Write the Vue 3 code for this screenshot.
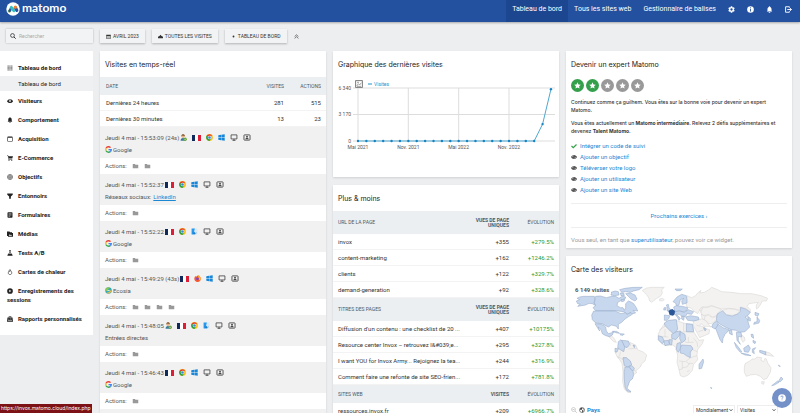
<script setup>
import { ref } from 'vue'

const menu = [
  { label: 'Visiteurs', icon: 'eye' },
  { label: 'Comportement', icon: 'bell' },
  { label: 'Acquisition', icon: 'window' },
  { label: 'E-Commerce', icon: 'cart' },
  { label: 'Objectifs', icon: 'target' },
  { label: 'Entonnoirs', icon: 'funnel' },
  { label: 'Formulaires', icon: 'form' },
  { label: 'Médias', icon: 'media' },
  { label: 'Tests A/B', icon: 'flask' },
  { label: 'Cartes de chaleur', icon: 'drop' },
  { label: 'Enregistrements des sessions', icon: 'record' },
  { label: 'Rapports personnalisés', icon: 'report' }
]

const visits = [
  { time: 'Jeudi 4 mai - 15:53:09 (24s)', icons: ['avatar', 'flag', 'chrome', 'windows', 'monitor', 'card'], source: 'Google', logo: 'google', actions: 2 },
  { time: 'Jeudi 4 mai - 15:52:37', icons: ['flag', 'chrome', 'windows', 'monitor', 'card'], source: 'Réseaux sociaux:', link: 'LinkedIn', actions: 1 },
  { time: 'Jeudi 4 mai - 15:52:22', icons: ['flag', 'chrome', 'finder', 'monitor', 'card'], source: 'Google', logo: 'google', actions: 1 },
  { time: 'Jeudi 4 mai - 15:49:29 (43s)', icons: ['flag', 'firefox', 'windows', 'monitor', 'card'], source: 'Ecosia', logo: 'ecosia', actions: 4 },
  { time: 'Jeudi 4 mai - 15:48:05', icons: ['avatar', 'flag', 'chrome', 'finder', 'monitor', 'card'], source: 'Entrées directes', actions: 1 },
  { time: 'Jeudi 4 mai - 15:46:43', icons: ['flag', 'chrome', 'windows', 'monitor', 'card'], source: 'Google', logo: 'google', actions: 1 }
]

const groups = [
  {
    title: 'URL de la page', metric: 'Vues de page uniques',
    rows: [['invox', '+355', '+279.5%'], ['content-marketing', '+162', '+1246.2%'], ['clients', '+122', '+329.7%'], ['demand-generation', '+92', '+328.6%']]
  },
  {
    title: 'Titres des pages', metric: 'Vues de page uniques',
    rows: [
      ["Diffusion d'un contenu : une checklist de 20 ...", '+407', '+10175%'],
      ['Resource center Invox – retrouvez l&#039;e...', '+295', '+327.8%'],
      ['I want YOU for Invox Army... Rejoignez la tea...', '+244', '+316.9%'],
      ['Comment faire une refonte de site SEO-frien...', '+172', '+781.8%']
    ]
  },
  { title: 'Sites web', metric: 'Visites', rows: [['ressources.invox.fr', '+209', '+6966.7%']] }
]

const challenges = [
  { label: 'Intégrer un code de suivi', done: true },
  { label: 'Ajouter un objectif' },
  { label: 'Téléverser votre logo' },
  { label: 'Ajouter un utilisateur' },
  { label: 'Ajouter un site Web' }
]

const values = [...Array(22).fill(0), 2020, 6200]
const points = values.map((v, i) => ({ x: 25 + i * 8.39, y: 64 - (v / 6340) * 53 }))
const line = points.map(p => `${p.x},${p.y}`).join(' ')
const months = ['Mai 2021', 'Nov. 2021', 'Mai 2022', 'Nov. 2022']

const search = ref('')

const quietLands = [
  '232,106 245,99 262,97 298,97 290,104 292,114 286,124 275,130 266,137 260,142 254,138 251,128 244,118 236,111',
  '284,132 292,130 298,134 292,138 284,137',
  '130,244 138,246 142,244 148,252 154,262 146,260 138,252',
  '194,262 212,270 218,284 236,292 245,300 240,318 230,326 226,336 212,348 206,344 208,338 200,330 196,318 184,308 174,308 172,316 158,308 150,292 156,290 160,280 176,290 178,276 186,276 196,272',
  '158,304 174,314 178,334 176,350 178,380 182,404 190,411 198,412 188,412 178,402 173,380 174,350 171,326',
  '207,346 216,352 208,358 204,353',
  '366,122 380,128 392,122 398,114 408,106 404,114 418,112 432,104 440,97 458,104 470,110 500,112 528,116 560,116 588,122 608,130 604,138 592,138 588,146 580,158 574,162 574,150 580,142 566,144 552,146 546,154 556,164 556,172 546,162 530,156 526,166 510,162 490,160 470,162 456,158 440,152 424,156 410,156 404,166 398,176 386,168 380,160 366,156 362,146 368,140',
  '404,164 412,157 426,158 440,153 456,158 470,164 460,172 456,182 442,186 430,178 418,182 410,178 408,170',
  '408,178 420,183 430,180 442,188 456,184 458,192 450,198 440,206 430,206 424,198 412,192',
  '472,166 490,161 510,163 524,168 514,178 500,181 484,178',
  '386,198 400,192 412,192 424,198 430,208 438,216 430,214 418,214 408,206 404,212 416,216 426,222 434,224 432,236 418,242 404,248 398,236 390,222 384,210',
  '338,198 356,204 364,206 384,208 386,230 396,246 402,256 416,254 412,266 398,284 396,300 398,314 386,328 382,346 370,360 356,366 346,362 342,344 336,322 338,302 334,286 332,276 322,270 306,272 292,268 280,256 280,236 290,218 300,204 310,198 330,194',
  '538,338 540,326 554,318 562,312 570,312 576,306 590,308 588,316 596,320 600,310 604,312 608,324 618,338 616,352 606,370 596,374 586,364 572,358 556,360 544,364 538,352',
  '590,380 598,380 596,388 590,386',
  '602,290 614,294 626,304 614,302 602,300',
  '528,238 538,246 540,256 534,262 528,252'
]

const quietBorders = [
  '310,198 300,214 282,226', '356,204 356,230 386,232', '336,230 356,232', '300,222 300,246', '282,244 310,246',
  '346,238 362,262 386,262', '386,250 396,262 398,276', '370,246 370,262', '342,318 362,320 376,308 396,302',
  '352,320 352,342 342,344', '352,338 366,336 374,324 384,326', '364,320 374,328', '366,350 374,346', '380,282 396,290',
  '382,276 378,292', '414,158 404,176', '420,184 418,194', '404,214 394,210', '418,214 414,226 400,230', '190,282 206,280 216,280', '166,290 164,304'
]

const activeLands = [
  '34,138 44,134 36,130 44,126 56,124 88,124 90,138 86,144 98,152 92,152 82,146 72,145 62,150 50,152 38,154 46,148 38,146',
  '92,124 106,123 124,128 140,124 152,124 162,130 172,124 182,126 180,132 170,136 158,142 156,152 166,158 174,158 178,166 182,158 182,146 190,138 200,142 206,146 214,158 218,168 204,166 212,174 202,176 198,172 188,178 176,170 150,167 92,167 84,158 92,152 88,144',
  '138,112 150,108 160,110 162,120 148,122 138,120', '164,104 180,100 206,97 232,97 222,104 206,108 196,112 182,110 170,112',
  '182,116 196,114 210,120 216,132 210,138 198,132 190,124', '166,114 176,114 178,122 168,122', '168,134 178,132 178,138 170,140',
  '86,168 150,168 168,176 180,173 186,178 198,173 202,178 192,184 180,192 170,202 160,208 160,222 154,214 140,210 130,216 122,212 112,206 92,204 82,194 80,180',
  '90,206 104,207 114,210 122,216 124,228 130,236 138,234 146,230 142,240 134,245 122,242 112,236 108,224 100,216 104,228 96,216',
  '142,229 154,229 164,235 152,233', '166,236 178,237 174,241 166,240',
  '160,260 168,254 174,262 180,274 176,290 166,284 158,278', '170,256 190,258 194,268 186,278 178,274 174,264', '150,280 160,281 156,291 150,291', '204,270 210,272 208,278',
  '174,308 184,308 196,318 200,330 188,336 178,332', '192,334 200,332 208,340 204,348 196,342',
  '180,336 192,336 204,350 206,360 202,372 194,378 190,390 186,400 198,410 186,408 180,396 178,370 178,350',
  '304,150 310,148 312,158 318,166 306,168 308,160', '297,158 304,158 302,165 296,165',
  '324,140 336,126 350,118 364,122 366,144 352,148 350,138 356,130 346,134 342,150 334,152 332,144',
  '330,102 352,102 346,107 334,107', '326,156 334,152 352,154 368,158 366,166 356,170 342,168 330,170',
  '330,170 344,168 358,172 370,164 386,170 380,178 366,176 362,184 350,184 344,178 334,178',
  '330,178 336,180 346,190 342,196 338,188', '350,184 358,184 356,196 350,192', '298,180 314,182 312,190 306,196 298,196',
  '362,186 376,182 400,186 402,194 386,198 368,196', '298,204 310,196 334,194 338,222 328,238 316,228 300,212',
  '364,206 382,208 386,230 364,230', '280,242 292,246 298,258 292,266 280,254', '296,258 310,256 314,268 300,272',
  '320,238 334,230 346,228 344,240 332,254 320,250', '346,230 360,238 362,254 350,264 344,250', '312,254 322,254 320,270 314,268',
  '336,266 346,262 348,278 340,292 334,284', '350,270 378,272 384,282 376,290 376,308 364,302 356,296 346,294 346,280',
  '414,312 416,320 410,340 402,342 402,328',
  '440,216 444,206 454,198 460,206 458,216 450,222', '452,220 460,208 466,212 474,218 492,224 488,230 480,238 474,250 472,264 464,252 458,236',
  '456,178 472,167 484,180 502,183 516,178 526,170 526,157 542,162 556,172 548,182 540,186 548,192 550,204 554,216 540,230 524,232 512,226 498,224 480,216 466,208 454,196',
  '514,232 528,232 530,246 520,244 520,256 526,268 516,256', '492,226 500,226 502,240 494,236',
  '508,262 520,276 530,290 526,292 514,278', '528,294 548,298 558,302 540,300', '536,280 550,270 556,280 550,292 538,290',
  '562,282 572,278 566,286 568,296 562,292', '558,238 564,238 566,250 560,246', '564,256 572,260 570,266 564,262', '584,286 602,290 602,300 594,296 584,292',
  '570,172 582,176 578,184 570,180', '576,186 584,196 582,204 566,208 568,202 576,200', '548,184 556,190 556,198 550,196',
  '648,366 654,372 646,380 640,380', '638,378 642,382 628,390 620,392', '640,330 646,334 642,334', '416,218 424,222 420,228', '436,398 440,398 440,401'
]
</script>

<template>
  <svg class="sprite" aria-hidden="true">
    <symbol id="eye" viewBox="0 0 12 12"><path d="M6 2.500C3 2.500 1 4.500 0 6.300 1 8 3 10 6 10s5-2 6-3.700C11 4.500 9 2.500 6 2.500z" /><circle cx="6" cy="6" r="2.300" fill="#fff" /><circle cx="6" cy="6" r="1.300" /></symbol>
    <symbol id="hidden" viewBox="0 0 12 12"><path d="M6 2C3 2 1 4 0 6c1 2 3 4 6 4s5-2 6-4c-1-2-3-4-6-4z" /><path d="M2.500 6c.5-1.200 1.500-2 2.500-2.300M9.500 6C9 7.200 8 8 7 8.300" fill="none" stroke="#fff" stroke-width=".9" /></symbol>
    <symbol id="bell" viewBox="0 0 12 12"><path d="M6 .5c.8 0 1.200.5 1.200 1.200C9 2.300 9.500 4 9.500 6v2l1.300 1.500H1.200L2.500 8V6c0-2 .5-3.700 2.300-4.300C4.800 1 5.200.5 6 .5zM4.500 10.200h3c0 1-.7 1.500-1.500 1.500s-1.500-.5-1.500-1.500z" /></symbol>
    <symbol id="window" viewBox="0 0 12 12"><path d="M2 .8h8c.7 0 1.200.5 1.200 1.200v8c0 .7-.5 1.200-1.200 1.200H2C1.300 11.200.8 10.700.8 10V2C.8 1.300 1.300.8 2 .8zM2 3.500V10h8V3.500z" fill-rule="evenodd" /></symbol>
    <symbol id="cart" viewBox="0 0 12 12"><path d="M0 1h2.200l.7 1.500H12L10.500 7H4.300l-.5 1.200h6.700v1H2.200L3.200 7 1.500 2.200H0z" /><circle cx="4" cy="10.500" r="1.100" /><circle cx="9.500" cy="10.500" r="1.100" /></symbol>
    <symbol id="target" viewBox="0 0 12 12"><g fill="none" stroke="currentColor" stroke-width="1.200"><circle cx="6" cy="6" r="5" /><circle cx="6" cy="6" r="2.700" /></g><circle cx="6" cy="6" r="1" /></symbol>
    <symbol id="funnel" viewBox="0 0 12 12"><path d="M.5 1h11v2.500L7.700 7v4.500H4.300V7L.5 3.500z" /></symbol>
    <symbol id="form" viewBox="0 0 12 12"><rect x="1" y=".5" width="10" height="11" rx="1.500" /><path d="M3 3.500h6M3 6h6M3 8.500h3.500" stroke="#fff" /></symbol>
    <symbol id="media" viewBox="0 0 12 12"><path d="M0 1h5l1 1.500h4V4h2v7.500H2V10H0z" /><path d="M3.500 9.500l2-3 1.500 1.800L8 7l2 2.500z" fill="#fff" /></symbol>
    <symbol id="flask" viewBox="0 0 12 12"><path d="M4 .5h4v1.200h-.8V5l4 5c.4.700 0 1.500-.8 1.500H1.600c-.8 0-1.200-.8-.8-1.500l4-5V1.700H4z" /><path d="M5.600 2v3.500L4 7.500h4L6.400 5.500V2z" fill="#fff" /></symbol>
    <symbol id="drop" viewBox="0 0 12 12"><path d="M6 1C7 3.500 9.500 5 9.500 7.700 9.500 9.800 8 11.200 6 11.200S2.500 9.800 2.500 7.700C2.500 6 4 5.200 3.800 3.200 5 3.700 5.500 4.300 5.500 5 6 4 6.200 2.500 6 1z" fill="none" stroke="currentColor" stroke-width="1.200" /></symbol>
    <symbol id="record" viewBox="0 0 12 12"><circle cx="6" cy="6" r="5.700" /><path d="M4.600 3.600v4.800L8.500 6z" fill="#fff" /></symbol>
    <symbol id="report" viewBox="0 0 12 12"><path d="M3.500.5h5V3H11l1 8.500H0L1 3h2.500z" /><path d="M4.500 1.500h3V3h-3zM2 8h8v1H2zM3 5.500h1.500V7H3zM7 5h1.500v2H7z" fill="#fff" /></symbol>
    <symbol id="grid" viewBox="0 0 12 12"><path d="M1 2h10M1 4.700h10M1 7.400h10M1 10h10" stroke="currentColor" stroke-width="1.300" stroke-dasharray="2.700 .9" /></symbol>
    <symbol id="search" viewBox="0 0 12 12"><circle cx="5" cy="5" r="3.800" fill="none" stroke="currentColor" stroke-width="1.600" /><path d="M8 8l3.300 3.300" stroke="currentColor" stroke-width="2" /></symbol>
    <symbol id="calendar" viewBox="0 0 12 12"><path d="M.5 1.500h11v10H.5zM1.800 4.500v5.700h8.400V4.500z" fill-rule="evenodd" /><path d="M3 6h6M3 8.500h6" stroke="currentColor" stroke-width="1.200" stroke-dasharray="1.500 .7" /></symbol>
    <symbol id="segment" viewBox="0 0 12 12"><path d="M6 1.500l2.500 3.500c2 .5 3.500 1.500 3.500 3v2H0V8c0-1.500 1.500-2.500 3.500-3z" /></symbol>
    <symbol id="dot" viewBox="0 0 12 12"><circle cx="6" cy="6" r="2.200" /></symbol>
    <symbol id="chevrons" viewBox="0 0 12 12"><path d="M1.500 6L6 2l4.500 4M1.500 10.500L6 6.500l4.500 4" fill="none" stroke="currentColor" stroke-width="1.500" /></symbol>
    <symbol id="down" viewBox="0 0 12 12"><path d="M1.500 3.500L6 8.500l4.500-5" fill="none" stroke="currentColor" stroke-width="2.200" /></symbol>
    <symbol id="gear" viewBox="0 0 12 12"><path d="M4.800.5h2.400l.4 1.600 1 .6 1.600-.5 1.200 2.100-1.200 1.100v1.200l1.200 1.100-1.200 2.100-1.600-.5-1 .6-.4 1.600H4.800l-.4-1.600-1-.6-1.600.5L.6 7.700l1.200-1.100V5.400L.6 4.300l1.200-2.100 1.600.5 1-.6zM6 4a2 2 0 100 4 2 2 0 000-4z" fill-rule="evenodd" /></symbol>
    <symbol id="info" viewBox="0 0 12 12"><circle cx="6" cy="6" r="5.700" /><path d="M6 2.300v1.700M6 5v4.500" stroke="#2450a0" stroke-width="1.500" /></symbol>
    <symbol id="logout" viewBox="0 0 12 12"><path d="M7.500 3V1.300H1v9.400h6.500V9M4 6h7M8.500 3.500L11 6 8.500 8.500" fill="none" stroke="currentColor" stroke-width="1.600" /></symbol>
    <symbol id="folder" viewBox="0 0 12 12"><path d="M.5 2h4.200l1.300 1.300h5.500v7H.5z" /></symbol>
    <symbol id="avatar" viewBox="0 0 12 12"><path d="M1 11.500c0-3 1.500-4.500 4-4.500s4 1.500 4 4.500z" fill="#39799f" /><circle cx="5.300" cy="4" r="2.700" fill="#e8b182" /><path d="M2.400 4C2.200 1.500 3.500.5 5.300.5s3.200 1 2.900 3.300C7 3 5 3.200 4 2.500 3.500 3.500 3 4 2.400 4z" fill="#80552c" /><circle cx="9" cy="9" r="2.800" fill="#6ca53b" /><path d="M7.700 9l1 1 1.700-2" fill="none" stroke="#fff" stroke-width=".8" /></symbol>
    <symbol id="flag" viewBox="0 0 9 6"><path fill="#fff" d="M0 0h9v6H0z" /><path fill="#102a5c" d="M0 0h3v6H0z" /><path fill="#dc1f36" d="M6 0h3v6H6z" /></symbol>
    <symbol id="chrome" viewBox="0 0 12 12"><circle cx="6" cy="6" r="5.800" fill="#f8c21c" /><path d="M6 6L1 3.100A5.800 5.800 0 0111 3.100H6z" fill="#e33b2e" /><path d="M6 6L1 3.100A5.800 5.800 0 006 11.800L8.600 7.500z" fill="#2da14b" /><circle cx="6" cy="6" r="2.800" fill="#fff" /><circle cx="6" cy="6" r="2.200" fill="#3f7fe8" /></symbol>
    <symbol id="firefox" viewBox="0 0 12 12"><path d="M7 .3c3.500 1.500 5 4.200 4.500 7A5.500 5.500 0 01.6 7C.3 4.800 1.200 3 2.300 1.700L3.500 3.200z" fill="#f7582f" /><path d="M7 .3c3.800 1.700 5 4.500 4.400 7.200C10.500 10 8 9.500 8.200 6.800 8.300 4.500 6.500 3 7 .3z" fill="#fdb72b" /><circle cx="5.900" cy="6.500" r="2.400" fill="#7c43cc" /></symbol>
    <symbol id="windows" viewBox="0 0 12 12"><path fill="#1785d8" d="M.5 2.100L5.300 1.400v4.300H.5zM5.900 1.300L11.500.5v5.200H5.900zM.5 6.300h4.800v4.300L.5 9.900zM5.900 6.300h5.600v5.200l-5.600-.8z" /></symbol>
    <symbol id="finder" viewBox="0 0 12 12"><path fill="#d9e9f5" d="M5 1h6v10H5z" /><path fill="#2698ee" d="M1 1h5.700C5.800 3 5.500 5 5.400 6.800h1.500c0 1.500.1 3 .6 4.200H1z" /><path d="M3 8.300c2 1.500 4.500 1.500 6.500 0" fill="none" stroke="#1c5283" stroke-width=".8" /></symbol>
    <symbol id="monitor" viewBox="0 0 12 12"><path d="M1 1.500h10v7H1zM6 8.500v2M3.500 11h5" fill="none" stroke="#444" stroke-width="1.400" /></symbol>
    <symbol id="card" viewBox="0 0 12 12"><rect x=".8" y="1.500" width="10.400" height="9" rx="1" fill="none" stroke="#444" stroke-width="1.500" /><circle cx="6" cy="4.700" r="1.600" fill="#444" /><path d="M3 9c.2-1.700 1.300-2.300 3-2.300S8.800 7.300 9 9z" fill="#444" /></symbol>
    <symbol id="google" viewBox="0 0 12 12"><g fill="none" stroke-width="2.400"><path d="M9.500 2.800A4.700 4.700 0 002 3.700" stroke="#e94335" /><path d="M2 3.700a4.700 4.700 0 000 4.600" stroke="#f9bb05" /><path d="M2 8.300a4.700 4.700 0 007 1.300" stroke="#34a853" /><path d="M9 9.600A4.700 4.700 0 0010.700 6.200H6" stroke="#4285f4" /></g></symbol>
    <symbol id="ecosia" viewBox="0 0 12 12"><circle cx="6" cy="6" r="5.600" fill="#36acb8" /><path d="M1 3.500C2.500 1 5 .3 7 .7 6 2 7.500 3 5 4.500 3 5.500 4 7 1 7z" fill="#8bc94b" /><path d="M3 9c2 1 5-.5 6-3.500L11 7c-1 3.500-4.500 5.500-8 3.500z" fill="#f4b63f" /><path d="M4 6h4" stroke="#fff" stroke-width="1.300" /></symbol>
    <symbol id="star" viewBox="0 0 12 12"><path d="M6 .5l1.700 3.600 3.900.5-2.900 2.700.8 3.900L6 9.300l-3.500 1.900.8-3.900L.4 4.600l3.900-.5z" /></symbol>
    <symbol id="check" viewBox="0 0 12 12"><path d="M1 6l3.500 3.500L11 3" fill="none" stroke="#34a048" stroke-width="2.400" /></symbol>
    <symbol id="zoomout" viewBox="0 0 12 12"><path d="M8 8l3.500 3.500M3 5h4" stroke="currentColor" stroke-width="1.200" /><circle cx="5" cy="5" r="4" fill="none" stroke="currentColor" /></symbol>
    <symbol id="globe" viewBox="0 0 12 12"><circle cx="6" cy="6" r="5" fill="#fff" stroke="#444" stroke-width="1.200" /><path d="M2 3l3-1.500 2 1-1 2.500-2 1-2-1zM6 6l3 1-1 3.500-1.500.5zM8.500 2L11 5 9 5z" fill="#444" /></symbol>
    <symbol id="help" viewBox="0 0 12 12"><circle cx="6" cy="6" r="5.800" fill="#fff" /><path d="M4.300 4.700C4.300 3.500 5 2.900 6 2.900s1.700.6 1.700 1.600C7.700 5.700 6 5.800 6 7.200M6 8.200v1.200" fill="none" stroke="#7390c8" stroke-width="1.200" /></symbol>
    <symbol id="picture" viewBox="0 0 12 12"><rect x="1" y="1" width="10" height="10" fill="#fff" stroke="#666" stroke-width="1.300" /><path d="M2.500 9L5 5.500l2 2L9.500 4M3 3.500h3M3 9.500h6" fill="none" stroke="#777" /></symbol>
  </svg>

  <div class="page">
    <header class="topbar">
      <a class="brand" href="#">
        <svg viewBox="0 0 14 14"><circle cx="7" cy="7" r="6.700" fill="#fff" /><circle cx="3.300" cy="9" r="1.600" fill="#95c748" /><path d="M3.600 8.800L5.300 6" stroke="#3152a0" stroke-width="2.600" stroke-linecap="round" /><path d="M5.300 5.400l2.500 3.300" stroke="#35bfc0" stroke-width="3" stroke-linecap="round" /><path d="M9.400 5.500l1.500 3" stroke="#3152a0" stroke-width="3" stroke-linecap="round" /><circle cx="9.300" cy="5.200" r="1.600" fill="#f38334" /></svg>
        <span>matomo</span>
      </a>
      <nav class="topnav">
        <a class="active" href="#">Tableau de bord</a>
        <a href="#">Tous les sites web</a>
        <a href="#">Gestionnaire de balises</a>
        <a v-for="i in ['gear', 'info', 'bell', 'logout']" :key="i" class="tool" href="#" :aria-label="i"><svg><use :href="'#' + i" /></svg></a>
      </nav>
    </header>

    <div class="controls">
      <label class="search">
        <svg><use href="#search" /></svg>
        <input v-model="search" type="text" placeholder="Rechercher" aria-label="Rechercher">
      </label>
      <div class="selectors">
        <button type="button"><svg><use href="#calendar" /></svg>Avril 2023</button>
        <button type="button"><svg><use href="#segment" /></svg>Toutes les visites</button>
        <button type="button"><svg><use href="#dot" /></svg>Tableau de bord</button>
        <button type="button" class="collapse" aria-label="Replier"><svg><use href="#chevrons" /></svg></button>
      </div>
    </div>

    <div class="body">
      <nav class="sidebar">
        <a class="item first" href="#"><svg><use href="#grid" /></svg>Tableau de bord</a>
        <a class="sub" href="#">Tableau de bord</a>
        <a v-for="m in menu" :key="m.label" class="item" href="#"><svg><use :href="'#' + m.icon" /></svg>{{ m.label }}</a>
      </nav>

      <main class="columns">
        <section class="column">
          <article class="card grow">
            <h2>Visites en temps-réel</h2>
            <table class="totals">
              <thead><tr><th>Date</th><th>Visites</th><th>Actions</th></tr></thead>
              <tbody>
                <tr><td>Dernières 24 heures</td><td>281</td><td>515</td></tr>
                <tr><td>Dernières 30 minutes</td><td>13</td><td>23</td></tr>
              </tbody>
            </table>
            <ul class="visits">
              <li v-for="v in visits" :key="v.time">
                <div class="visit">
                  <div class="line">
                    <span class="time">{{ v.time }}</span>
                    <svg v-for="i in v.icons" :key="i" :class="i"><use :href="'#' + i" /></svg>
                  </div>
                  <div class="source">
                    <svg v-if="v.logo"><use :href="'#' + v.logo" /></svg>{{ v.source }} <a v-if="v.link" href="#">{{ v.link }}</a>
                  </div>
                </div>
                <div class="actions">Actions: <svg v-for="n in v.actions" :key="n"><use href="#folder" /></svg></div>
              </li>
            </ul>
          </article>
        </section>

        <section class="column">
          <article class="card">
            <h2>Graphique des dernières visites</h2>
            <svg class="chart" viewBox="0 0 226 100">
              <path class="grid" d="M20 11h202M20 37.500h202M20 64h202M25 11v53M75.300 11v53M125.700 11v53M176 11v53" />
              <g class="labels">
                <text x="18" y="13" text-anchor="end">6 340</text>
                <text x="18" y="39" text-anchor="end">3 170</text>
                <text x="18" y="66" text-anchor="end">0</text>
                <text v-for="(m, i) in months" :key="m" :x="25 + i * 50.300" y="72" text-anchor="middle">{{ m }}</text>
              </g>
              <use href="#picture" x="22" y="3" width="8" height="8" />
              <path d="M35 7h4" class="key" />
              <text x="41" y="9" class="legend">Visites</text>
              <polyline :points="line" class="curve" />
              <circle v-for="p in points" :key="p.x" :cx="p.x" :cy="p.y" r="1.200" class="mark" />
            </svg>
          </article>

          <article class="card grow">
            <h2>Plus &amp; moins</h2>
            <table class="movers">
              <tbody v-for="g in groups" :key="g.title">
                <tr><th>{{ g.title }}</th><th class="metric">{{ g.metric }}</th><th>Évolution</th></tr>
                <tr v-for="r in g.rows" :key="r[0]"><td>{{ r[0] }}</td><td>{{ r[1] }}</td><td class="up">{{ r[2] }}</td></tr>
              </tbody>
            </table>
          </article>
        </section>

        <section class="column">
          <article class="card">
            <h2>Devenir un expert Matomo</h2>
            <div class="expert">
              <div class="stars"><span v-for="n in 5" :key="n" :class="{ won: n < 3 }"><svg><use href="#star" /></svg></span></div>
              <p>Continuez comme ça guilhem. Vous êtes sur la bonne voie pour devenir un expert Matomo.</p>
              <p>Vous êtes actuellement un <b>Matomo intermédiaire</b>. Relevez 2 défis supplémentaires et devenez <b>Talent Matomo</b>.</p>
              <ul>
                <li v-for="c in challenges" :key="c.label"><svg><use :href="c.done ? '#check' : '#hidden'" /></svg><a href="#">{{ c.label }}</a></li>
              </ul>
              <div class="next"><a href="#">Prochains exercices ›</a></div>
              <p class="note">Vous seul, en tant que <a href="#">superutilisateur</a>, pouvez voir ce widget.</p>
            </div>
          </article>

          <article class="card grow">
            <h2>Carte des visiteurs</h2>
            <div class="map">
              <svg viewBox="18 90 648 330" role="img" aria-label="Carte">
                <polygon v-for="p in quietLands" :key="p" :points="p" class="quiet" />
                <polyline v-for="p in quietBorders" :key="p" :points="p" class="border" />
                <polygon v-for="p in activeLands" :key="p" :points="p" class="lit" />
                <polygon points="310,168 316,164 322,162 330,168 329,178 324,182 314,180" class="top" />
              </svg>
              <span class="total">6 149 visites</span>
            </div>
            <div class="mapbar">
              <svg class="faded"><use href="#zoomout" /></svg>
              <svg><use href="#globe" /></svg>
              <a href="#">Pays</a>
              <span class="pick"><select aria-label="Zone"><option>Mondialement</option></select><svg><use href="#down" /></svg></span>
              <span class="pick"><select aria-label="Mesure"><option>Visites</option></select><svg><use href="#down" /></svg></span>
            </div>
          </article>
        </section>
      </main>
    </div>

    <div class="status">https://invox.matomo.cloud/index.php</div>
    <button type="button" class="help" aria-label="Aide"><svg><use href="#help" /></svg></button>
  </div>
</template>

<style>
body {
  background: #eceef0;
}
</style>

<style scoped>
* {
  box-sizing: border-box;
}
.sprite {
  position: absolute;
  width: 0;
  height: 0;
}
.page {
  height: 100vh;
  overflow: hidden;
  display: flex;
  flex-direction: column;
  font: 6px/8px Roboto, "Liberation Sans", sans-serif;
  color: #333;
}
svg {
  fill: currentColor;
  flex: none;
}
a {
  color: #1c88d4;
  text-decoration: none;
}
ul {
  list-style: none;
  margin: 0;
  padding: 0;
}
button,
input,
select {
  font: inherit;
  color: inherit;
  border: 0;
  background: none;
  padding: 0;
  margin: 0;
}
.topbar {
  flex: none;
  height: 22px;
  display: flex;
  justify-content: space-between;
  background: #2450a0;
  box-shadow: 0 1px 2px rgba(0, 0, 0, 0.3);
  padding: 0 2px 0 6px;
}
.brand {
  display: flex;
  align-items: center;
  gap: 2px;
  height: 18px;
  color: #fff;
  font: bold 12px/16px Lato, sans-serif;
}
.brand svg {
  width: 14px;
  height: 14px;
}
.brand span {
  padding-bottom: 2px;
}
.topnav {
  display: flex;
  font-size: 7px;
}
.topnav a {
  color: #fff;
  padding: 0 6px 4px;
  display: flex;
  align-items: center;
}
.topnav .active {
  background: #1c468f;
}
.topnav .tool {
  width: 19px;
}
.tool svg {
  width: 7px;
  height: 7px;
}
.controls {
  flex: none;
  display: flex;
  gap: 7px;
  padding: 7px 8px 8px 6px;
  font-size: 5px;
}
.search {
  width: 87px;
  height: 14px;
  display: flex;
  align-items: center;
  gap: 3px;
  padding: 0 4px;
  background: #f1f3f4;
  box-shadow: 0 0 2px rgba(0, 0, 0, 0.25);
}
.search svg {
  width: 6px;
  height: 6px;
}
.search input {
  flex: 1;
  min-width: 0;
  outline: 0;
}
.search input::placeholder {
  color: #aaa;
}
.selectors {
  display: flex;
  gap: 7px;
}
.selectors button {
  height: 14px;
  display: flex;
  align-items: center;
  gap: 2px;
  padding: 0 6px;
  text-transform: uppercase;
  background: #f1f3f4;
  box-shadow: 0 1px 2px rgba(0, 0, 0, 0.25);
}
.selectors button svg {
  width: 5px;
  height: 5px;
}
.selectors .collapse {
  padding: 0;
  background: none;
  box-shadow: none;
}
.body {
  flex: 1;
  min-height: 0;
  display: flex;
  align-items: flex-start;
  gap: 7px;
  padding-right: 8px;
}
.sidebar {
  width: 93px;
  flex: none;
  background: #fff;
  padding: 7px 0;
  font-weight: bold;
}
.sidebar a {
  display: block;
  color: #222;
}
.sidebar .item {
  padding: 5px 10px 5px 7px;
  line-height: 9px;
}
.sidebar .first {
  padding-bottom: 4px;
}
.sidebar .item svg {
  width: 6px;
  height: 6px;
  margin-right: 5px;
  vertical-align: middle;
}
.sidebar .sub {
  background: #eff0f1;
  font-weight: normal;
  padding-left: 18px;
  line-height: 15px;
}
.columns {
  flex: 1;
  align-self: stretch;
  display: grid;
  grid-template-columns: repeat(3, minmax(0, 1fr));
  gap: 7px;
}
.column {
  display: flex;
  flex-direction: column;
  gap: 8px;
  min-height: 0;
}
.card {
  background: #fff;
  box-shadow: 0 1px 2px rgba(0, 0, 0, 0.12);
  flex: none;
}
.grow {
  flex: 1 0 auto;
  display: flex;
  flex-direction: column;
}
h2 {
  margin: 0;
  padding: 9px 5px 7px 5px;
  font: 7px/10px Inter, sans-serif;
  color: #222;
}
table {
  width: 100%;
  border-collapse: collapse;
}
th {
  background: #eceff1;
  height: 18px;
  padding: 0 5px;
  font-size: 5px;
  line-height: 5px;
  font-weight: normal;
  text-transform: uppercase;
  color: #4b5a66;
  text-align: right;
}
td {
  height: 16px;
  padding: 0 5px;
  text-align: right;
  box-shadow: inset 0 -1px #f3f3f3;
}
th:first-child,
td:first-child {
  text-align: left;
}
.totals th,
.totals td {
  width: 37px;
}
.totals th:first-child,
.totals td:first-child {
  width: auto;
  padding-left: 6px;
}
.visits {
  flex: 1;
  background: #f1f1f1;
  color: #555;
}
.visit {
  padding: 5px 5px 3px;
  display: grid;
  gap: 1px;
  height: 31px;
}
.line,
.source,
.actions {
  display: flex;
  align-items: center;
}
.line svg {
  width: 7px;
  height: 7px;
  margin-right: 5px;
}
.line .monitor,
.line .card {
  width: 8px;
}
.line .card {
  background: none;
  box-shadow: none;
}
.line .flag {
  width: 9px;
  height: 6px;
}
.time {
  margin-right: 1px;
}
.source {
  gap: 1px;
}
.source svg {
  width: 7px;
  height: 7px;
}
.source a {
  margin-left: 1px;
  text-decoration: underline;
}
.actions {
  height: 16px;
  padding: 0 5px;
  gap: 5px;
  background: #fff;
}
.actions svg {
  width: 7px;
  height: 6px;
  color: #999;
}
.chart {
  display: block;
  width: 100%;
}
.chart .grid {
  stroke: #ddd;
  fill: none;
}
.labels text {
  font-size: 5px;
  fill: #555;
}
.key {
  stroke: #1a94cc;
}
.legend {
  font-size: 5px;
  fill: #1a94cc;
}
.curve {
  fill: none;
  stroke: #4fa8cf;
}
.mark {
  fill: #1483c4;
}
.movers {
  table-layout: fixed;
}
.movers th {
  width: 45px;
}
.movers th:first-child {
  width: auto;
}
.movers tbody:not(:last-child) th {
  height: 23px;
}
.movers .metric {
  font-weight: bold;
  width: 52px;
}
.movers td:first-child {
  white-space: nowrap;
}
.movers .up {
  color: #1d9a36;
}
.expert {
  padding: 0 5px 4px;
}
.stars {
  display: flex;
  gap: 2px;
  padding: 2px 0 6px;
}
.stars span {
  width: 13px;
  height: 13px;
  border-radius: 50%;
  background: #999;
  color: #fff;
  display: grid;
  place-items: center;
}
.stars .won {
  background: #34a04c;
}
.stars svg {
  width: 7px;
  height: 7px;
}
.expert p {
  margin: 0 0 5px;
  padding-right: 9px;
  font: 500 5px/8px Inter, sans-serif;
}
.expert b {
  font-weight: 700;
}
.expert li {
  display: flex;
  align-items: center;
  gap: 3px;
  height: 11px;
}
.expert li svg {
  width: 6px;
  height: 6px;
  color: #555;
}
.next {
  margin-top: 8px;
  border: 1px solid #eee;
  border-width: 1px 0;
  text-align: center;
  line-height: 23px;
}
.expert .note {
  margin: 8px 0 0;
  color: #999;
  font: inherit;
}
.map {
  position: relative;
  padding: 3px 5px 0;
}
.map svg {
  display: block;
  width: 100%;
}
.map .total {
  position: absolute;
  left: 9px;
  top: 4px;
  background: #fff;
  padding-right: 2px;
  font-weight: bold;
  color: #555;
}
.quiet {
  fill: #f3f2f1;
  stroke: #d3d1cf;
  stroke-width: 1.5;
}
.border {
  fill: none;
  stroke: #d3d1cf;
  stroke-width: 1.5;
}
.lit {
  fill: #c7d7ed;
  stroke: #8fa5c4;
  stroke-width: 1.5;
}
.top {
  fill: #2a5798;
}
.mapbar {
  display: flex;
  align-items: center;
  gap: 2px;
  padding: 10px 14px 0 5px;
}
.mapbar svg {
  width: 6px;
  height: 6px;
}
.mapbar .faded {
  color: #aaa;
}
.mapbar a {
  font-weight: bold;
  margin-right: auto;
}
.pick {
  display: flex;
  align-items: center;
  min-width: 41px;
  height: 10px;
  padding: 0 1px 0 2px;
  border: 1px solid #eee;
}
.pick select {
  appearance: none;
  flex: 1;
  font-size: 5px;
  outline: 0;
}
.mapbar .pick svg {
  width: 4px;
  height: 4px;
}
.status {
  position: fixed;
  left: 0;
  bottom: 0;
  background: #7c1116;
  color: #fff;
  font: 5px/9px Inter, sans-serif;
  padding: 0 2px 0 1px;
}
.help {
  position: fixed;
  right: 8px;
  bottom: 5px;
  width: 20px;
  height: 20px;
  border-radius: 50%;
  background: #7390c8;
  display: grid;
  place-items: center;
}
.help svg {
  width: 8px;
  height: 8px;
}
</style>
